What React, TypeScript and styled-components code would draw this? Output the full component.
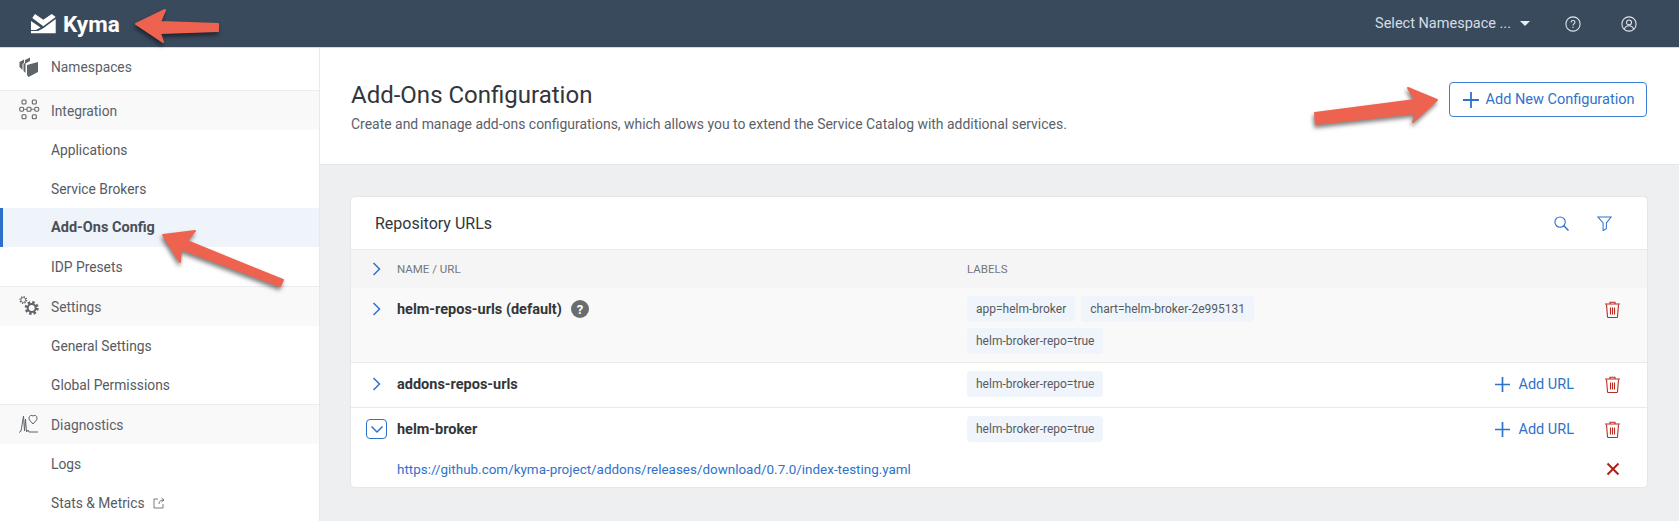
import React from "react";
import styled, { createGlobalStyle } from "styled-components";

const GlobalStyle = createGlobalStyle`
  html, body { margin: 0; padding: 0; height: 100%; background: #edeff0; }
  body { font-family: Roboto, "Noto Sans", "Liberation Sans", sans-serif; color: #32363a; overflow: hidden; }
  * { box-sizing: border-box; }
`;

const Page = styled.div`
  position: relative;
  width: 1679px;
  height: 521px;
  overflow: hidden;
  display: flex;
  flex-direction: column;
`;

const TopBar = styled.header`
  height: 48px;
  flex: none;
  background: #3a4a5d;
  border-bottom: 1px solid #d6dbe0;
  display: flex;
  align-items: center;
  padding: 0 42px 0 31px;
  color: #fff;
`;

const Brand = styled.div`
  display: flex;
  align-items: center;
  gap: 7px;
  font-size: 22.5px;
  font-weight: 700;
  flex: 1;
`;

const NamespaceSelect = styled.div`
  display: flex;
  align-items: center;
  gap: 9px;
  color: #d5dde6;
  font-size: 14.5px;
  margin-right: 35px;
`;

const Caret = styled.span`
  width: 0;
  height: 0;
  border-left: 5px solid transparent;
  border-right: 5px solid transparent;
  border-top: 5px solid #e8edf2;
`;

const TopIcon = styled.svg`
  width: 16px;
  height: 16px;
  & + & { margin-left: 40px; }
  fill: none;
  stroke: #e2e8ee;
  stroke-width: 1.2;
`;

const Body = styled.div`
  flex: 1;
  display: flex;
  min-height: 0;
`;

const Sidebar = styled.nav`
  width: 320px;
  flex: none;
  background: #fff;
  border-right: 1px solid #e6e8ea;
`;

const NavGroup = styled.div<{ $top?: boolean }>`
  height: ${(p) => (p.$top ? "42px" : "40px")};
  display: flex;
  align-items: center;
  padding-left: 18px;
  padding-bottom: ${(p) => (p.$top ? "4px" : "0")};
  gap: 13px;
  font-size: 13.8px;
  color: #5b6168;
  background: ${(p) => (p.$top ? "#fff" : "#f9f9f9")};
  border-top: ${(p) => (p.$top ? "none" : "1px solid #ececec")};
  svg { width: 20px; height: 20px; flex: none; color: #5f6469; overflow: visible; }
`;

const NavItem = styled.div<{ $active?: boolean }>`
  height: 39px;
  display: flex;
  align-items: center;
  gap: 8px;
  padding-left: ${(p) => (p.$active ? "48px" : "51px")};
  font-size: ${(p) => (p.$active ? "14.5px" : "13.8px")};
  font-weight: ${(p) => (p.$active ? 700 : 400)};
  color: ${(p) => (p.$active ? "#4a4f55" : "#565b61")};
  background: ${(p) => (p.$active ? "#eff4fb" : "#fff")};
  border-left: ${(p) => (p.$active ? "3px solid #2d6fcb" : "none")};
`;

const Main = styled.main`
  flex: 1;
  min-width: 0;
`;

const PageHead = styled.section`
  height: 117px;
  background: #fff;
  border-bottom: 1px solid #e4e6e8;
  display: flex;
  justify-content: space-between;
  padding: 32px 32px 0 31px;
`;

const Title = styled.h1`
  margin: 0;
  font-size: 24px;
  line-height: 30px;
  font-weight: 400;
  color: #32363a;
`;

const Subtitle = styled.p`
  margin: 5px 0 0;
  font-size: 13.95px;
  line-height: 18px;
  color: #5b6168;
`;

const OutlineButton = styled.button`
  height: 35px;
  width: 198px;
  margin-top: 2px;
  padding: 0 0 0 1px;
  display: flex;
  align-items: center;
  justify-content: center;
  gap: 7px;
  background: #fff;
  border: 1px solid #3d7fd6;
  border-radius: 4px;
  color: #2f72cc;
  font: 400 14.5px Roboto, sans-serif;
`;

const Panel = styled.section`
  margin: 32px 32px 0 31px;
  height: 290px;
  background: #fff;
  border-radius: 4px;
  box-shadow: 0 0 2px rgba(0, 0, 0, 0.12);
  overflow: hidden;
`;

const PanelHead = styled.div`
  height: 53px;
  display: flex;
  align-items: center;
  justify-content: space-between;
  padding: 0 35px 0 24px;
  font-size: 16px;
  color: #32363a;
  border-bottom: 1px solid #e9e9e9;
`;

const PanelTools = styled.div`
  display: flex;
  gap: 28px;
  color: #2f72cc;
`;

const Toggle = styled.span<{ $boxed?: boolean }>`
  width: 21px;
  height: 20px;
  margin-left: 15px;
  margin-top: 3px;
  display: flex;
  align-items: center;
  justify-content: center;
  color: #2f72cc;
  border: ${(p) => (p.$boxed ? "1px solid #2f72cc" : "none")};
  border-radius: 4px;
`;

const Row = styled.div<{ $tint?: boolean; $height: number; $line?: boolean }>`
  height: ${(p) => p.$height}px;
  display: grid;
  grid-template-columns: 46px 570px 1fr;
  background: ${(p) => (p.$tint ? "#f9f9f9" : "#fff")};
  border-bottom: ${(p) => (p.$line ? "1px solid #e9e9e9" : "none")};
  padding-top: 8px;
`;

const HeadRow = styled(Row)`
  background: #f5f5f5;
  padding-top: 0;
  align-items: center;
  font-size: 11.5px;
  color: #74777a;
  ${Toggle} { margin-top: 0; }
`;

const Name = styled.div`
  display: flex;
  align-items: center;
  align-self: start;
  gap: 9px;
  height: 26px;
  font-size: 14.5px;
  font-weight: 700;
  color: #32363a;
`;

const HelpBadge = styled.span`
  width: 18px;
  height: 18px;
  border-radius: 50%;
  background: #6a6d70;
  color: #fff;
  font-size: 13px;
  font-weight: 700;
  display: flex;
  align-items: center;
  justify-content: center;
`;

const Labels = styled.div`
  display: flex;
  flex-wrap: wrap;
  align-content: flex-start;
  gap: 6px;
  width: 300px;
`;

const Label = styled.span`
  height: 26px;
  padding: 0 9px;
  display: flex;
  align-items: center;
  background: #f0f4fb;
  border-radius: 4px;
  font-size: 12px;
  color: #565b61;
`;

const RowEnd = styled.div`
  display: flex;
  justify-content: space-between;
  align-items: flex-start;
  padding-right: 27px;
`;

const Actions = styled.div`
  display: flex;
  align-items: flex-start;
  justify-content: flex-end;
  gap: 31px;
  flex: 1;
`;

const AddUrl = styled.span`
  display: flex;
  align-items: center;
  gap: 8px;
  height: 26px;
  font-size: 14.5px;
  color: #2f72cc;
`;

const TrashWrap = styled.span`
  height: 26px;
  display: flex;
  align-items: center;
  color: #bb2b22;
`;

const UrlRow = styled.div`
  height: 38px;
  display: flex;
  align-items: center;
  justify-content: space-between;
  padding: 0 27px 0 46px;
  font-size: 13.45px;
  color: #2f72cc;
`;

const CloseIcon = styled.svg`
  width: 14px;
  height: 14px;
  stroke: #b3201a;
  stroke-width: 2;
`;

const ArrowLayer = styled.svg`
  position: absolute;
  left: 0;
  top: 0;
  width: 1679px;
  height: 521px;
  pointer-events: none;
  polygon {
    fill: #ee6350;
    stroke: #ee6350;
    stroke-width: 2;
    stroke-linejoin: round;
    filter: drop-shadow(-1px 3px 2px rgba(0, 0, 0, 0.5));
  }
`;

const KymaLogo = () => (
  <svg width="25" height="20" viewBox="0 0 25 20" fill="#fff">
    <path d="M4 0 L12.300 5.700 L20.700 0 L24.700 3 L12.300 12.300 L1.300 4 Z" />
    <path d="M0 7 L9.500 13.500 L5 16 H0 Z" />
    <path d="M24.700 5 V19.300 H0 V17 H7 L12.300 14.300 Z" />
  </svg>
);

const PlusIcon = ({ size = 15 }: { size?: number }) => (
  <svg width={size} height={size} viewBox="0 0 16 16" stroke="currentColor" strokeWidth="1.8">
    <path d="M8 0v16M0 8h16" />
  </svg>
);

const Chevron = ({ down }: { down?: boolean }) => (
  <svg width="14" height="14" viewBox="0 0 14 14" fill="none" stroke="currentColor" strokeWidth="1.5">
    <path d={down ? "M1.500 4.500l5.500 5.500 5.500-5.500" : "M3.500 1l6 6-6 6"} />
  </svg>
);

const Trash = () => (
  <svg width="15" height="17" viewBox="0 0 15 17" fill="none" stroke="currentColor" strokeWidth="1.1">
    <path d="M0 3h15M5 3V1.200h5V3" />
    <path d="M1.500 3.500l1 12.200c0 .5.4.8.9.8h8.200c.5 0 .9-.3.9-.8l1-12.200" />
    <path d="M5.500 6.500v7M7.500 6.500v7M9.500 6.500v7" />
  </svg>
);

const RepoLabel = () => (
  <Labels>
    <Label>helm-broker-repo=true</Label>
  </Labels>
);

export default function App() {
  return (
    <Page>
      <GlobalStyle />
      <TopBar>
        <Brand>
          <KymaLogo />
          Kyma
        </Brand>
        <NamespaceSelect>
          Select Namespace ...
          <Caret />
        </NamespaceSelect>
        <TopIcon viewBox="0 0 18 18">
          <circle cx="9" cy="9" r="8" />
          <path d="M6.800 7.200c0-1.300 1-2.100 2.200-2.100s2.200.8 2.200 2c0 1.800-2.200 1.700-2.200 3.600" />
          <path d="M9 12.200v1.200" />
        </TopIcon>
        <TopIcon viewBox="0 0 18 18">
          <circle cx="9" cy="9" r="8" />
          <circle cx="9" cy="7.200" r="2.800" />
          <path d="M3.800 14.800c.8-2.600 2.800-3.900 5.200-3.900s4.400 1.300 5.200 3.900" />
        </TopIcon>
      </TopBar>
      <Body>
        <Sidebar>
          <NavGroup $top>
            <svg viewBox="0 0 20 20" fill="currentColor">
              <path d="M1.500 5 L6 2.500 V6 L4.500 7 V13 L1.500 10 Z" />
              <path d="M7 3 L12 .5 V4 L7.500 6.500 V16 L5.500 14 V7 L7 6 Z" />
              <path d="M9 8 L20 5 V15 L10.500 20 L9 18 Z" />
            </svg>
            Namespaces
          </NavGroup>
          <NavGroup>
            <svg viewBox="0 0 20 20" fill="none" stroke="currentColor" strokeWidth="1.100">
              <rect x="4" y="-1" width="4" height="4" rx="1" />
              <rect x="14.300" y="-1" width="4" height="4" rx="1" />
              <rect x="1.700" y="6.300" width="4" height="4" rx="1.500" />
              <rect x="9" y="6.300" width="4" height="4" rx="1" />
              <rect x="16.700" y="6.300" width="4" height="4" rx="1.500" />
              <rect x="4" y="13.700" width="4" height="4" rx="1" />
              <rect x="14.300" y="13.700" width="4" height="4" rx="1" />
              <path d="M5.700 8.300h3.300M13 8.300h3.700" strokeWidth="0.800" />
            </svg>
            Integration
          </NavGroup>
          <NavItem>Applications</NavItem>
          <NavItem>Service Brokers</NavItem>
          <NavItem $active>Add-Ons Config</NavItem>
          <NavItem>IDP Presets</NavItem>
          <NavGroup>
            <svg viewBox="0 0 20 20" fill="none" stroke="currentColor">
              <circle cx="13.700" cy="11" r="5.500" strokeWidth="3" strokeDasharray="2.300 2" />
              <circle cx="13.700" cy="11" r="4" strokeWidth="2" />
              <circle cx="5.300" cy="3" r="3.200" strokeWidth="1.500" strokeDasharray="1.200 1.300" />
              <circle cx="5.300" cy="3" r="2.400" strokeWidth="0.800" />
            </svg>
            Settings
          </NavGroup>
          <NavItem>General Settings</NavItem>
          <NavItem>Global Permissions</NavItem>
          <NavGroup>
            <svg viewBox="0 0 20 20" fill="none" stroke="currentColor" strokeWidth="1">
              <path d="M1 17.500 L3 16 L5.500 1 L6.500 16 L7.500 4 L8.500 17 L10 15 L11 17 H20" />
              <path d="M15 9 L11.500 5 C10 2.500 12 -1 15 1 C18 -1 20 2.500 18.500 5 Z" />
            </svg>
            Diagnostics
          </NavGroup>
          <NavItem>Logs</NavItem>
          <NavItem>
            Stats &amp; Metrics
            <svg width="12" height="12" viewBox="0 0 12 12" fill="none" stroke="#6a6d70" strokeWidth="0.900">
              <path d="M5 2H1v9h9V7M6 7c0-3 2-4 5-4M8.500 1L11 3 8.500 5" />
            </svg>
          </NavItem>
        </Sidebar>
        <Main>
          <PageHead>
            <div>
              <Title>Add-Ons Configuration</Title>
              <Subtitle>Create and manage add-ons configurations, which allows you to extend the Service Catalog with additional services.</Subtitle>
            </div>
            <OutlineButton>
              <PlusIcon size={16} />
              Add New Configuration
            </OutlineButton>
          </PageHead>
          <Panel>
            <PanelHead>
              Repository URLs
              <PanelTools>
                <svg width="15" height="15" viewBox="0 0 16 16" fill="none" stroke="currentColor" strokeWidth="1.200">
                  <circle cx="6.500" cy="6.500" r="5.500" />
                  <path d="M10.500 10.500l5 5" strokeWidth="1.600" />
                </svg>
                <svg width="15" height="15" viewBox="0 0 16 16" fill="none" stroke="currentColor" strokeWidth="1.100">
                  <path d="M.8 1h14.400L10 7.500v6L6.500 15.500V7.500z" />
                </svg>
              </PanelTools>
            </PanelHead>
            <HeadRow $height={38}>
              <Toggle><Chevron /></Toggle>
              <span>NAME / URL</span>
              <span>LABELS</span>
            </HeadRow>
            <Row $tint $line $height={75}>
              <Toggle><Chevron /></Toggle>
              <Name>
                helm-repos-urls (default)
                <HelpBadge>?</HelpBadge>
              </Name>
              <RowEnd>
                <Labels>
                  <Label>app=helm-broker</Label>
                  <Label>chart=helm-broker-2e995131</Label>
                  <Label>helm-broker-repo=true</Label>
                </Labels>
                <TrashWrap><Trash /></TrashWrap>
              </RowEnd>
            </Row>
            <Row $line $height={45}>
              <Toggle><Chevron /></Toggle>
              <Name>addons-repos-urls</Name>
              <RowEnd>
                <RepoLabel />
                <Actions>
                  <AddUrl><PlusIcon />Add URL</AddUrl>
                  <TrashWrap><Trash /></TrashWrap>
                </Actions>
              </RowEnd>
            </Row>
            <Row $height={42}>
              <Toggle $boxed><Chevron down /></Toggle>
              <Name>helm-broker</Name>
              <RowEnd>
                <RepoLabel />
                <Actions>
                  <AddUrl><PlusIcon />Add URL</AddUrl>
                  <TrashWrap><Trash /></TrashWrap>
                </Actions>
              </RowEnd>
            </Row>
            <UrlRow>
              https://github.com/kyma-project/addons/releases/download/0.7.0/index-testing.yaml
              <CloseIcon viewBox="0 0 14 14"><path d="M1.500 1.500l11 11M12.500 1.500l-11 11" /></CloseIcon>
            </UrlRow>
          </Panel>
        </Main>
      </Body>
      <ArrowLayer viewBox="0 0 1679 521">
        <polygon points="136,24 165,10 160,22 218,24 218,31 160,33 163,42" />
        <polygon points="163,235 195,231 187,241 283,280 280,286 181,249 180,262" />
        <polygon points="1437,100 1408,88 1415,100 1315,113 1316,124 1416,113 1413,122" />
      </ArrowLayer>
    </Page>
  );
}
